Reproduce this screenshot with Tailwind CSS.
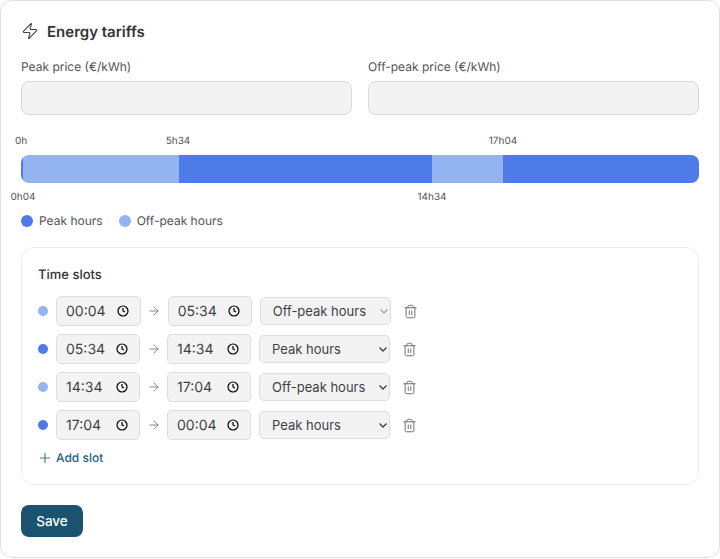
<!DOCTYPE html>
<html lang="en">
<head>
    <meta charset="UTF-8">
    <title>Energy tariffs</title>
    <script src="https://cdn.jsdelivr.net/npm/@tailwindcss/browser@4"></script>
</head>
<body class="bg-white font-['Inter',sans-serif] text-[#3f3f46] [text-rendering:geometricPrecision]">
    <div class="h-[558px] border border-[#e0e0e0] rounded-xl bg-white px-5 pt-5 pb-5">
        <div class="flex items-center gap-2 h-5 mb-[15px]">
            <svg class="w-[18px] h-[18px] text-[#3f3f46]" viewBox="0 0 24 24" fill="none" stroke="currentColor" stroke-width="1.4" stroke-linecap="round" stroke-linejoin="round"><path d="M4 14a1 1 0 0 1-.78-1.63l9.9-10.2a.5.5 0 0 1 .86.46l-1.92 6.02A1 1 0 0 0 13 10h7a1 1 0 0 1 .78 1.63l-9.9 10.2a.5.5 0 0 1-.86-.46l1.92-6.02A1 1 0 0 0 11 14z"/></svg>
            <h2 class="text-[15px] leading-[21px] font-semibold text-[#333338]">Energy tariffs</h2>
        </div>

        <div class="grid grid-cols-2 gap-4">
            <div>
                <div class="h-5 text-xs leading-[21px] text-[#52525b] mb-[5px]">Peak price (€/kWh)</div>
                <div class="h-[34px] rounded-lg border border-[#d9d9d9] bg-[#f3f3f3]"></div>
            </div>
            <div>
                <div class="h-5 text-xs leading-[21px] text-[#52525b] mb-[5px]">Off-peak price (€/kWh)</div>
                <div class="h-[34px] rounded-lg border border-[#d9d9d9] bg-[#f3f3f3]"></div>
            </div>
        </div>

        <div class="relative h-7 mt-10">
            <div class="flex h-full rounded-lg overflow-hidden">
                <div class="w-[2px] bg-[#4f7be8]"></div>
                <div class="w-[156px] bg-[#93b4f0]"></div>
                <div class="w-[253px] bg-[#4f7be8]"></div>
                <div class="w-[71px] bg-[#93b4f0]"></div>
                <div class="flex-1 bg-[#4f7be8]"></div>
            </div>
            <span class="absolute left-0 -top-[22px] -translate-x-1/2 text-[10px] leading-4 text-[#52525b]">0h</span>
            <span class="absolute left-[157px] -top-[22px] -translate-x-1/2 text-[10px] leading-4 text-[#52525b]">5h34</span>
            <span class="absolute left-[482px] -top-[22px] -translate-x-1/2 text-[10px] leading-4 text-[#52525b]">17h04</span>
            <span class="absolute left-[2px] top-[34px] -translate-x-1/2 text-[10px] leading-4 text-[#52525b]">0h04</span>
            <span class="absolute left-[411px] top-[34px] -translate-x-1/2 text-[10px] leading-4 text-[#52525b]">14h34</span>
        </div>

        <div class="flex items-center gap-4 mt-7 h-5 text-xs text-[#52525b]">
            <div class="flex items-center gap-[6px]"><span class="w-3 h-3 rounded-full bg-[#4f7be8]"></span>Peak hours</div>
            <div class="flex items-center gap-[6px]"><span class="w-3 h-3 rounded-full bg-[#93b4f0]"></span>Off-peak hours</div>
        </div>

        <div class="mt-4 border border-[#eeeeee] rounded-xl p-4">
            <div class="h-5 leading-[22px] text-[13px] font-medium text-[#333338]">Time slots</div>

            <div class="flex flex-col gap-2 mt-3">
                <div class="flex items-center h-[30px]">
                    <span class="w-[10px] h-[10px] rounded-full bg-[#93b4f0] mr-2"></span>
                    <div class="w-[84.7px] h-[30px] flex items-center justify-between pl-[9px] pr-[11px] rounded-[5px] border border-[#dddddd] bg-[#f3f3f3] text-[14px]">00:04
                        <svg class="w-3 h-3 text-black" viewBox="0 0 24 24" fill="none" stroke="currentColor" stroke-width="2.4"><circle cx="12" cy="12" r="10"/><path d="M12 6v6l4 2"/></svg>
                    </div>
                    <svg class="w-[14px] h-[14px] mx-[6.5px] text-[#71717a]" viewBox="0 0 24 24" fill="none" stroke="currentColor" stroke-width="1.4" stroke-linecap="round" stroke-linejoin="round"><path d="M5 12h14M12 5l7 7-7 7"/></svg>
                    <div class="w-[84px] h-[30px] flex items-center justify-between pl-[9px] pr-[11px] rounded-[5px] border border-[#dddddd] bg-[#f3f3f3] text-[14px]">05:34
                        <svg class="w-3 h-3 text-black" viewBox="0 0 24 24" fill="none" stroke="currentColor" stroke-width="2.4"><circle cx="12" cy="12" r="10"/><path d="M12 6v6l4 2"/></svg>
                    </div>
                    <div class="relative ml-2">
                        <select class="block w-[131px] h-7 pl-3 pt-px appearance-none rounded-[5px] border border-[#dddddd] bg-[#f3f3f3] text-[13px]"><option>Off-peak hours</option><option>Peak hours</option></select>
                        <svg class="absolute right-[3px] top-[12px] w-2 h-[5px] text-[#9a9a9a]" viewBox="0 0 8 5" fill="none" stroke="currentColor" stroke-width="1.1"><path d="M.5.5 4 4 7.5.5"/></svg>
                    </div>
                    <svg class="ml-3 w-[15px] h-[15px] text-[#71717a]" viewBox="0 0 24 24" fill="none" stroke="currentColor" stroke-width="1.6" stroke-linecap="round" stroke-linejoin="round"><path d="M3 6h18M19 6v14c0 1-1 2-2 2H7c-1 0-2-1-2-2V6M8 6V4c0-1 1-2 2-2h4c1 0 2 1 2 2v2M10 11v6M14 11v6"/></svg>
                </div>
                <div class="flex items-center h-[30px]">
                    <span class="w-[10px] h-[10px] rounded-full bg-[#4f7be8] mr-2"></span>
                    <div class="w-[84px] h-[30px] flex items-center justify-between pl-[9px] pr-[11px] rounded-[5px] border border-[#dddddd] bg-[#f3f3f3] text-[14px]">05:34
                        <svg class="w-3 h-3 text-black" viewBox="0 0 24 24" fill="none" stroke="currentColor" stroke-width="2.4"><circle cx="12" cy="12" r="10"/><path d="M12 6v6l4 2"/></svg>
                    </div>
                    <svg class="w-[14px] h-[14px] mx-[6.5px] text-[#71717a]" viewBox="0 0 24 24" fill="none" stroke="currentColor" stroke-width="1.4" stroke-linecap="round" stroke-linejoin="round"><path d="M5 12h14M12 5l7 7-7 7"/></svg>
                    <div class="w-[84px] h-[30px] flex items-center justify-between pl-[9px] pr-[11px] rounded-[5px] border border-[#dddddd] bg-[#f3f3f3] text-[14px]">14:34
                        <svg class="w-3 h-3 text-black" viewBox="0 0 24 24" fill="none" stroke="currentColor" stroke-width="2.4"><circle cx="12" cy="12" r="10"/><path d="M12 6v6l4 2"/></svg>
                    </div>
                    <div class="relative ml-2">
                        <select class="block w-[131px] h-7 pl-3 pt-px appearance-none rounded-[5px] border border-[#dddddd] bg-[#f3f3f3] text-[13px]"><option>Peak hours</option><option>Off-peak hours</option></select>
                        <svg class="absolute right-[3px] top-[12px] w-2 h-[5px] text-[#3f3f46]" viewBox="0 0 8 5" fill="none" stroke="currentColor" stroke-width="1.3"><path d="M.5.5 4 4 7.5.5"/></svg>
                    </div>
                    <svg class="ml-3 w-[15px] h-[15px] text-[#71717a]" viewBox="0 0 24 24" fill="none" stroke="currentColor" stroke-width="1.6" stroke-linecap="round" stroke-linejoin="round"><path d="M3 6h18M19 6v14c0 1-1 2-2 2H7c-1 0-2-1-2-2V6M8 6V4c0-1 1-2 2-2h4c1 0 2 1 2 2v2M10 11v6M14 11v6"/></svg>
                </div>
                <div class="flex items-center h-[30px]">
                    <span class="w-[10px] h-[10px] rounded-full bg-[#93b4f0] mr-2"></span>
                    <div class="w-[84px] h-[30px] flex items-center justify-between pl-[9px] pr-[11px] rounded-[5px] border border-[#dddddd] bg-[#f3f3f3] text-[14px]">14:34
                        <svg class="w-3 h-3 text-black" viewBox="0 0 24 24" fill="none" stroke="currentColor" stroke-width="2.4"><circle cx="12" cy="12" r="10"/><path d="M12 6v6l4 2"/></svg>
                    </div>
                    <svg class="w-[14px] h-[14px] mx-[6.5px] text-[#71717a]" viewBox="0 0 24 24" fill="none" stroke="currentColor" stroke-width="1.4" stroke-linecap="round" stroke-linejoin="round"><path d="M5 12h14M12 5l7 7-7 7"/></svg>
                    <div class="w-[84px] h-[30px] flex items-center justify-between pl-[9px] pr-[11px] rounded-[5px] border border-[#dddddd] bg-[#f3f3f3] text-[14px]">17:04
                        <svg class="w-3 h-3 text-black" viewBox="0 0 24 24" fill="none" stroke="currentColor" stroke-width="2.4"><circle cx="12" cy="12" r="10"/><path d="M12 6v6l4 2"/></svg>
                    </div>
                    <div class="relative ml-2">
                        <select class="block w-[131px] h-7 pl-3 pt-px appearance-none rounded-[5px] border border-[#dddddd] bg-[#f3f3f3] text-[13px]"><option>Off-peak hours</option><option>Peak hours</option></select>
                        <svg class="absolute right-[3px] top-[12px] w-2 h-[5px] text-[#3f3f46]" viewBox="0 0 8 5" fill="none" stroke="currentColor" stroke-width="1.3"><path d="M.5.5 4 4 7.5.5"/></svg>
                    </div>
                    <svg class="ml-3 w-[15px] h-[15px] text-[#71717a]" viewBox="0 0 24 24" fill="none" stroke="currentColor" stroke-width="1.6" stroke-linecap="round" stroke-linejoin="round"><path d="M3 6h18M19 6v14c0 1-1 2-2 2H7c-1 0-2-1-2-2V6M8 6V4c0-1 1-2 2-2h4c1 0 2 1 2 2v2M10 11v6M14 11v6"/></svg>
                </div>
                <div class="flex items-center h-[30px]">
                    <span class="w-[10px] h-[10px] rounded-full bg-[#4f7be8] mr-2"></span>
                    <div class="w-[84px] h-[30px] flex items-center justify-between pl-[9px] pr-[11px] rounded-[5px] border border-[#dddddd] bg-[#f3f3f3] text-[14px]">17:04
                        <svg class="w-3 h-3 text-black" viewBox="0 0 24 24" fill="none" stroke="currentColor" stroke-width="2.4"><circle cx="12" cy="12" r="10"/><path d="M12 6v6l4 2"/></svg>
                    </div>
                    <svg class="w-[14px] h-[14px] mx-[6.5px] text-[#71717a]" viewBox="0 0 24 24" fill="none" stroke="currentColor" stroke-width="1.4" stroke-linecap="round" stroke-linejoin="round"><path d="M5 12h14M12 5l7 7-7 7"/></svg>
                    <div class="w-[84px] h-[30px] flex items-center justify-between pl-[9px] pr-[11px] rounded-[5px] border border-[#dddddd] bg-[#f3f3f3] text-[14px]">00:04
                        <svg class="w-3 h-3 text-black" viewBox="0 0 24 24" fill="none" stroke="currentColor" stroke-width="2.4"><circle cx="12" cy="12" r="10"/><path d="M12 6v6l4 2"/></svg>
                    </div>
                    <div class="relative ml-2">
                        <select class="block w-[131px] h-7 pl-3 pt-px appearance-none rounded-[5px] border border-[#dddddd] bg-[#f3f3f3] text-[13px]"><option>Peak hours</option><option>Off-peak hours</option></select>
                        <svg class="absolute right-[3px] top-[12px] w-2 h-[5px] text-[#3f3f46]" viewBox="0 0 8 5" fill="none" stroke="currentColor" stroke-width="1.3"><path d="M.5.5 4 4 7.5.5"/></svg>
                    </div>
                    <svg class="ml-3 w-[15px] h-[15px] text-[#71717a]" viewBox="0 0 24 24" fill="none" stroke="currentColor" stroke-width="1.6" stroke-linecap="round" stroke-linejoin="round"><path d="M3 6h18M19 6v14c0 1-1 2-2 2H7c-1 0-2-1-2-2V6M8 6V4c0-1 1-2 2-2h4c1 0 2 1 2 2v2M10 11v6M14 11v6"/></svg>
                </div>
            </div>

            <div class="flex items-center gap-[3px] h-5 mt-2 text-xs font-medium text-[#2a5f7d]">
                <svg class="w-4 h-4 -ml-px text-[#4d7a93]" viewBox="0 0 24 24" fill="none" stroke="currentColor" stroke-width="1.7" stroke-linecap="round"><path d="M5 12h14M12 5v14"/></svg>
                Add slot
            </div>
        </div>

        <button class="mt-5 h-8 w-[62px] rounded-lg bg-[#1a5270] text-white text-[13.5px] font-medium">Save</button>
    </div>
</body>
</html>
